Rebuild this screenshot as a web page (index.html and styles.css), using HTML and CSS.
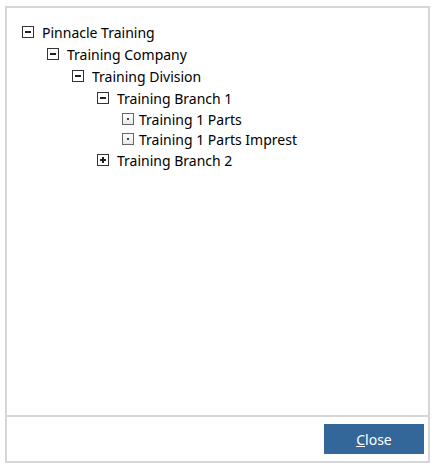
FILE: index.html
```html
<!DOCTYPE html>
<html lang="en">
<head>
    <meta charset="UTF-8">
    <title>Hierarchy</title>
    <link rel="stylesheet" href="styles.css">
</head>
<body>
    <div class="dialog">
        <div class="treebox">
            <ul class="tree">
                <li>
                    <div class="node"><span class="toggle minus"></span>Pinnacle Training</div>
                    <ul>
                        <li>
                            <div class="node"><span class="toggle minus"></span>Training Company</div>
                            <ul>
                                <li>
                                    <div class="node"><span class="toggle minus"></span>Training Division</div>
                                    <ul>
                                        <li>
                                            <div class="node"><span class="toggle minus"></span>Training Branch 1</div>
                                            <ul>
                                                <li><div class="node leaf"><span class="toggle dot"></span>Training 1 Parts</div></li>
                                                <li><div class="node leaf"><span class="toggle dot"></span>Training 1 Parts Imprest</div></li>
                                            </ul>
                                        </li>
                                        <li>
                                            <div class="node"><span class="toggle plus"></span>Training Branch 2</div>
                                        </li>
                                    </ul>
                                </li>
                            </ul>
                        </li>
                    </ul>
                </li>
            </ul>
        </div>
        <div class="actions">
            <button class="btn"><u>C</u>lose</button>
        </div>
    </div>
</body>
</html>
```

FILE: styles.css
```css
body {
    margin: 0;
    padding: 6px 0 0 5px;
    font-family: "Noto Sans", sans-serif;
    font-size: 14px;
    color: #000;
    background: #fff;
}
.dialog {
    width: 421px;
    height: 453px;
    border: 2px solid #d6d6d6;
    display: flex;
    flex-direction: column;
}
.treebox {
    flex: 1;
    padding: 13px 0 0 15px;
    border-bottom: 2px solid #d6d6d6;
}
.tree, .tree ul {
    list-style: none;
    margin: 0;
    padding: 0;
}
.tree ul {
    padding-left: 25px;
}
.node {
    display: flex;
    align-items: center;
    height: 22px;
    white-space: nowrap;
}
.node.leaf {
    height: 20px;
}
.toggle {
    position: relative;
    box-sizing: border-box;
    width: 12px;
    height: 12px;
    border: 1px solid #333;
    background: #fff;
    margin-right: 8px;
    flex: none;
}
.toggle.minus::before, .toggle.plus::before {
    content: "";
    position: absolute;
    left: 2px;
    top: 4px;
    width: 6px;
    height: 2px;
    background: #222;
}
.toggle.plus::after {
    content: "";
    position: absolute;
    left: 4px;
    top: 2px;
    width: 2px;
    height: 6px;
    background: #222;
}
.toggle.dot {
    width: 12px;
    height: 12px;
    border-color: #666;
    background: linear-gradient(#fff, #e8e8e8);
    margin-right: 5px;
}
.toggle.dot::before {
    content: "";
    position: absolute;
    left: 4px;
    top: 4px;
    width: 2px;
    height: 2px;
    background: #444;
}
.actions {
    height: 44px;
    display: flex;
    justify-content: flex-end;
    align-items: center;
    padding-right: 4px;
}
.btn {
    width: 100px;
    height: 30px;
    border: none;
    background: #336699;
    color: #fff;
    font-family: "Noto Sans", sans-serif;
    font-size: 14px;
    padding: 0;
}
```
